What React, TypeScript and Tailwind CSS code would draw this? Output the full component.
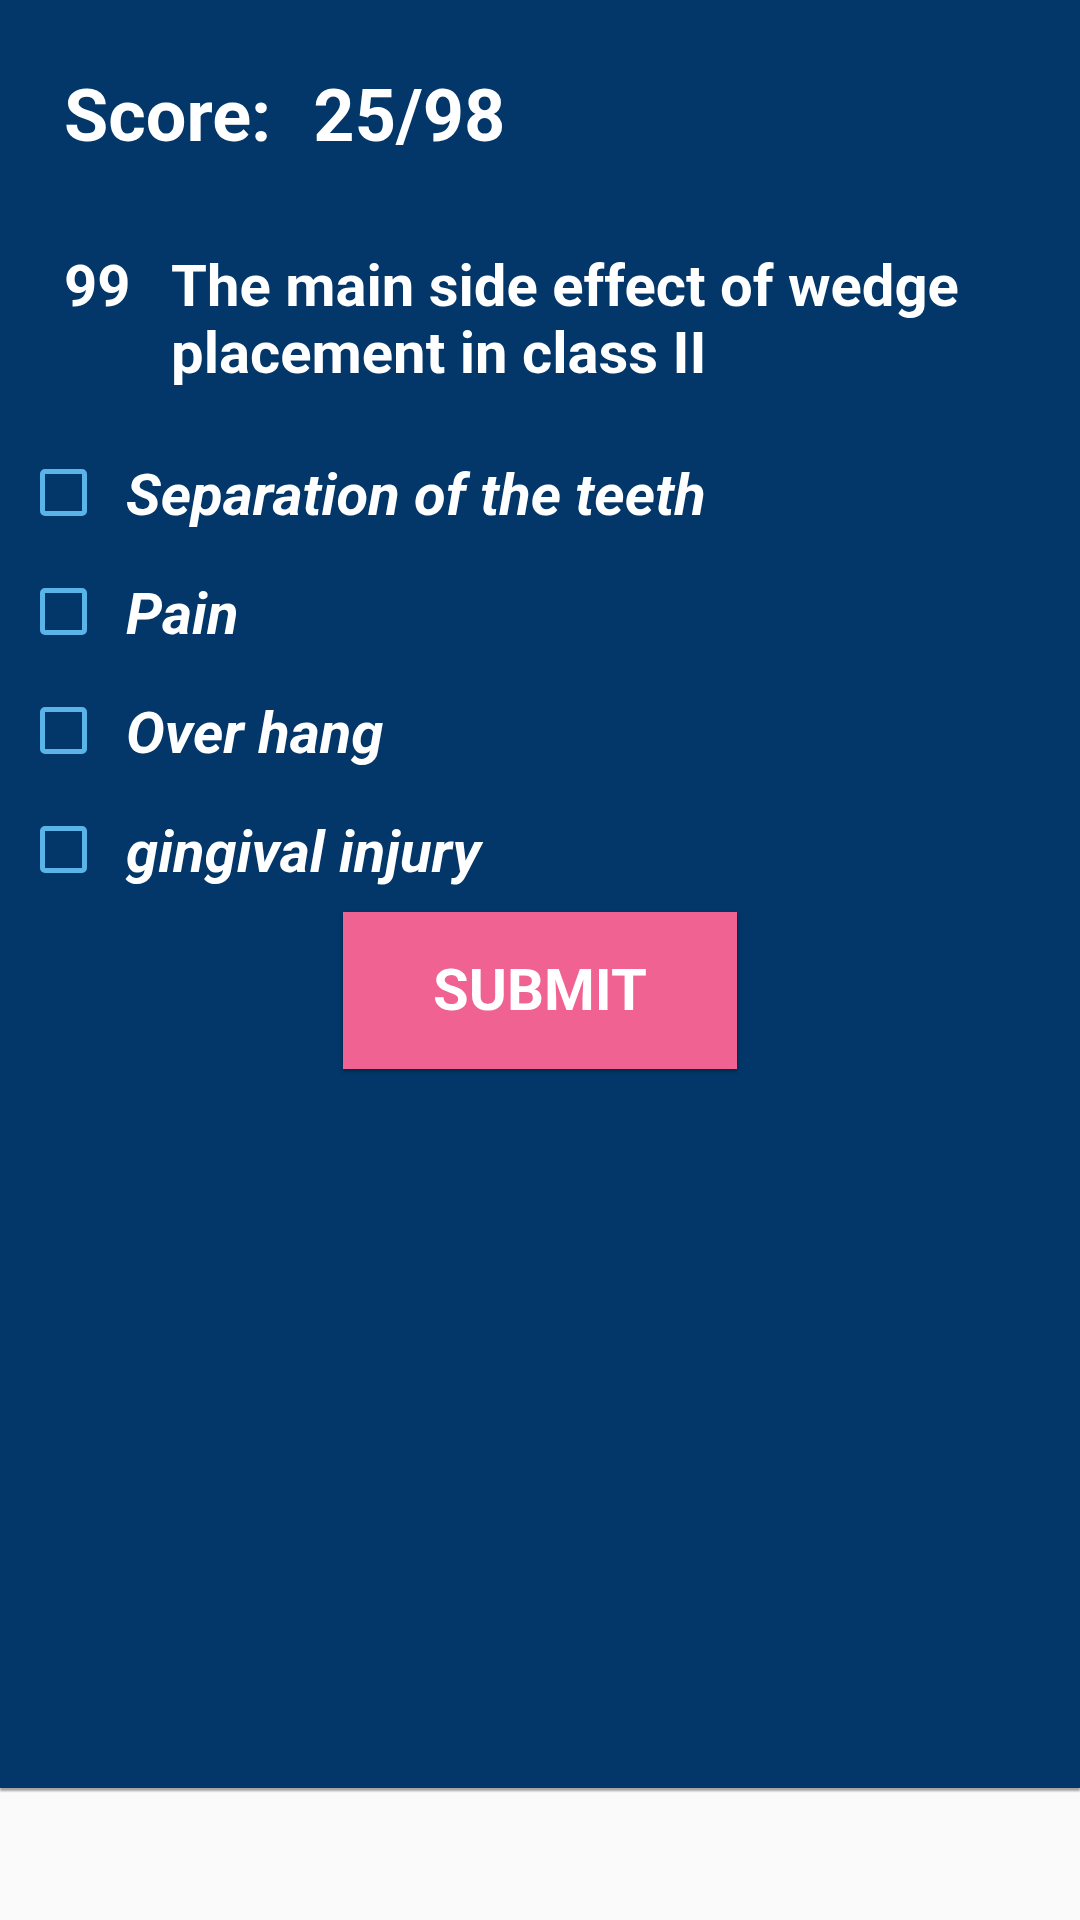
import React from "react";

const options = ["Separation of the teeth", "Pain", "Over hang", "gingival injury"];

export default function App() {
  return (
    <div className="w-[1080px] h-[1920px] flex flex-col font-['Roboto',sans-serif] text-white">
      {/* Quiz area */}
      <main className="h-[1788px] bg-[#033769] flex flex-col shadow-[0_3px_2px_rgba(0,0,0,0.35)] relative z-10">
        {/* Score */}
        <div className="mt-[75px] pl-[64px] flex items-baseline text-[72px] leading-[84px] font-bold">
          <span>Score:</span>
          <span className="ml-[42px]">25/98</span>
        </div>

        {/* Question */}
        <div className="mt-[94px] pl-[64px] pr-[60px] flex text-[58px] leading-[67px] font-bold">
          <span className="w-[107px] shrink-0">99</span>
          <p>The main side effect of wedge placement in class II</p>
        </div>

        {/* Options */}
        <div className="mt-[49px] flex flex-col">
          {options.map((opt) => (
            <label key={opt} className="h-[119px] flex items-center pl-[40px]">
              <span className="w-[47px] h-[47px] shrink-0 rounded-[5px] border-[5px] border-[#5ab4e8] mb-[6px]" />
              <span className="ml-[39px] text-[58px] leading-[119px] font-bold italic">{opt}</span>
            </label>
          ))}
        </div>

        {/* Submit */}
        <div className="flex justify-center">
          <button className="w-[394px] h-[157px] bg-[#f06292] text-white text-[58px] font-bold shadow-[0_2px_4px_rgba(0,0,0,0.35)]">
            SUBMIT
          </button>
        </div>
      </main>

      {/* Bottom strip */}
      <div className="flex-1 bg-[#fafafa]" />
    </div>
  );
}
